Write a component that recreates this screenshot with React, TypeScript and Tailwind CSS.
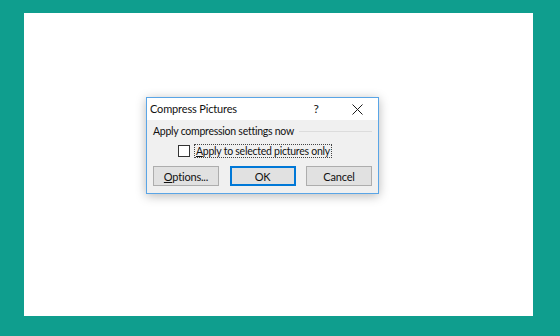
import React from "react";

function CloseIcon() {
  return (
    <svg width="11" height="11" viewBox="0 0 11 11" fill="none" stroke="#1a1a1a" strokeWidth="1">
      <path d="M0.5 0.5L10.5 10.5M10.5 0.5L0.5 10.5" />
    </svg>
  );
}

function DlgButton({ children, primary }: { children: React.ReactNode; primary?: boolean }) {
  return (
    <button
      className={
        primary
          ? "h-[20px] w-[66px] bg-[#e1e1e1] border-2 border-[#0078d7] text-[11px] tracking-[-0.2px] text-[#111] leading-none"
          : "h-[20px] w-[66px] bg-[#e1e1e1] border border-[#adadad] text-[11px] tracking-[-0.2px] text-[#111] leading-none"
      }
    >
      {children}
    </button>
  );
}

export default function App() {
  return (
    <div
      className="w-[560px] h-[336px] bg-[#0f9e8e] pt-[13px] pl-[24px] pr-[27px] pb-[20px]"
      style={{ fontFamily: 'Lato, "Noto Sans", sans-serif' }}
    >
      <div className="h-full bg-white pl-[122px] pt-[84px]">
        {/* Dialog */}
        <div className="w-[233px] border border-[#5aa5e6] bg-[#f0f0f0] shadow-[0_2px_10px_rgba(0,0,0,0.28)]">
          {/* Title bar */}
          <div className="h-[22px] bg-white flex items-center text-[11px] tracking-[-0.15px] text-[#111]">
            <span className="pl-[3px]">Compress Pictures</span>
            <span className="ml-auto w-[10px] text-center text-[12px]">?</span>
            <span className="ml-[31px] mr-[15px] flex items-center">
              <CloseIcon />
            </span>
          </div>

          {/* Body */}
          <div className="px-[6px] pt-[4px] pb-[7px] text-[10.5px] tracking-[-0.25px] text-[#111]">
            <div className="flex items-center gap-[5px] h-[15px]">
              <span>Apply compression settings now</span>
              <div className="flex-1 h-px bg-[#dcdcdc]" />
            </div>

            <div className="flex items-center h-[14px] mt-[5px] pl-[25px]">
              <div className="w-[12px] h-[12px] border border-[#333] bg-white" />
              <span className="ml-[4px] px-[1px] border border-dotted border-[#444] leading-[12px]">
                <span className="underline">A</span>pply to selected pictures only
              </span>
            </div>

            <div className="flex items-center justify-between mt-[8px]">
              <DlgButton>
                <span className="underline">O</span>ptions...
              </DlgButton>
              <DlgButton primary>OK</DlgButton>
              <DlgButton>Cancel</DlgButton>
            </div>
          </div>
        </div>
      </div>
    </div>
  );
}
